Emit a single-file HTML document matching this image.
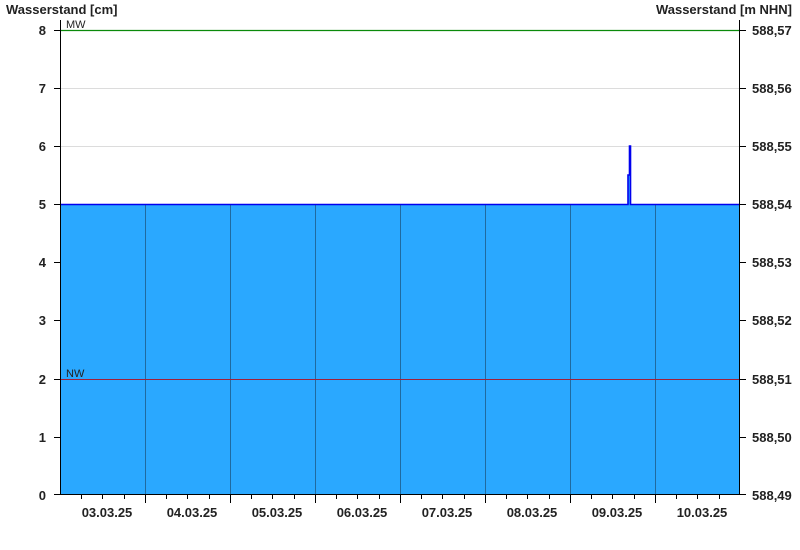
<!DOCTYPE html><html><head><style>body{margin:0;background:#fff}svg{display:block;font-family:"Liberation Sans",Arial,sans-serif}</style></head><body>
<svg width="800" height="550" xmlns="http://www.w3.org/2000/svg">
<rect width="800" height="550" fill="#fff"/>
<g stroke="#dcdcdc" stroke-width="1"><line x1="60" y1="88.5" x2="740" y2="88.5"/><line x1="60" y1="146.5" x2="740" y2="146.5"/></g>
<rect x="60" y="204.5" width="680" height="290.5" fill="#2aa8ff"/>
<rect x="628" y="175" width="3" height="30" fill="#2aa8ff"/>
<g stroke="#1f6aa0" stroke-width="1"><line x1="145.5" y1="205" x2="145.5" y2="495"/><line x1="230.5" y1="205" x2="230.5" y2="495"/><line x1="315.5" y1="205" x2="315.5" y2="495"/><line x1="400.5" y1="205" x2="400.5" y2="495"/><line x1="485.5" y1="205" x2="485.5" y2="495"/><line x1="570.5" y1="205" x2="570.5" y2="495"/><line x1="655.5" y1="205" x2="655.5" y2="495"/></g>
<line x1="60" y1="379.5" x2="740" y2="379.5" stroke="#a0203a" stroke-width="1"/>
<line x1="60" y1="30.5" x2="740" y2="30.5" stroke="#0a8a0a" stroke-width="1.2"/>
<polyline points="60,204.5 628,204.5 628,175 629.5,175 629.5,146 630.5,146 630.5,204.5 740,204.5" fill="none" stroke="#0000ee" stroke-width="1.6"/>
<g stroke="#000" stroke-width="1">
<line x1="60.5" y1="20" x2="60.5" y2="495"/><line x1="739.5" y1="20" x2="739.5" y2="495"/><line x1="60" y1="494.5" x2="740" y2="494.5"/>
<line x1="54" y1="30.5" x2="60" y2="30.5"/><line x1="54" y1="88.5" x2="60" y2="88.5"/><line x1="54" y1="146.5" x2="60" y2="146.5"/><line x1="54" y1="204.5" x2="60" y2="204.5"/><line x1="54" y1="262.5" x2="60" y2="262.5"/><line x1="54" y1="320.5" x2="60" y2="320.5"/><line x1="54" y1="379.5" x2="60" y2="379.5"/><line x1="54" y1="437.5" x2="60" y2="437.5"/><line x1="54" y1="494.5" x2="60" y2="494.5"/>
<line x1="740" y1="30.5" x2="746" y2="30.5"/><line x1="740" y1="88.5" x2="746" y2="88.5"/><line x1="740" y1="146.5" x2="746" y2="146.5"/><line x1="740" y1="204.5" x2="746" y2="204.5"/><line x1="740" y1="262.5" x2="746" y2="262.5"/><line x1="740" y1="320.5" x2="746" y2="320.5"/><line x1="740" y1="379.5" x2="746" y2="379.5"/><line x1="740" y1="437.5" x2="746" y2="437.5"/><line x1="740" y1="494.5" x2="746" y2="494.5"/>
<path d="M145.5 495v8M230.5 495v8M315.5 495v8M400.5 495v8M485.5 495v8M570.5 495v8M655.5 495v8M81.5 495v4M102.5 495v4M124.5 495v4M166.5 495v4M187.5 495v4M209.5 495v4M251.5 495v4M272.5 495v4M294.5 495v4M336.5 495v4M357.5 495v4M379.5 495v4M421.5 495v4M442.5 495v4M464.5 495v4M506.5 495v4M527.5 495v4M549.5 495v4M591.5 495v4M612.5 495v4M634.5 495v4M676.5 495v4M697.5 495v4M719.5 495v4"/>
</g>
<g font-size="13" font-weight="bold" fill="#222">
<text x="6" y="14">Wasserstand [cm]</text>
<text x="792" y="14" text-anchor="end">Wasserstand [m NHN]</text>
<g text-anchor="end"><text x="46" y="35">8</text><text x="46" y="93">7</text><text x="46" y="151">6</text><text x="46" y="209">5</text><text x="46" y="267">4</text><text x="46" y="325">3</text><text x="46" y="384">2</text><text x="46" y="442">1</text><text x="46" y="500">0</text></g>
<g><text x="752" y="35">588,57</text><text x="752" y="93">588,56</text><text x="752" y="151">588,55</text><text x="752" y="209">588,54</text><text x="752" y="267">588,53</text><text x="752" y="325">588,52</text><text x="752" y="384">588,51</text><text x="752" y="442">588,50</text><text x="752" y="500">588,49</text></g>
<g text-anchor="middle"><text x="107" y="517">03.03.25</text><text x="192" y="517">04.03.25</text><text x="277" y="517">05.03.25</text><text x="362" y="517">06.03.25</text><text x="447" y="517">07.03.25</text><text x="532" y="517">08.03.25</text><text x="617" y="517">09.03.25</text><text x="702" y="517">10.03.25</text></g>
</g>
<g font-size="11" fill="#222"><text x="66" y="28">MW</text><text x="66" y="377">NW</text></g>
</svg></body></html>
